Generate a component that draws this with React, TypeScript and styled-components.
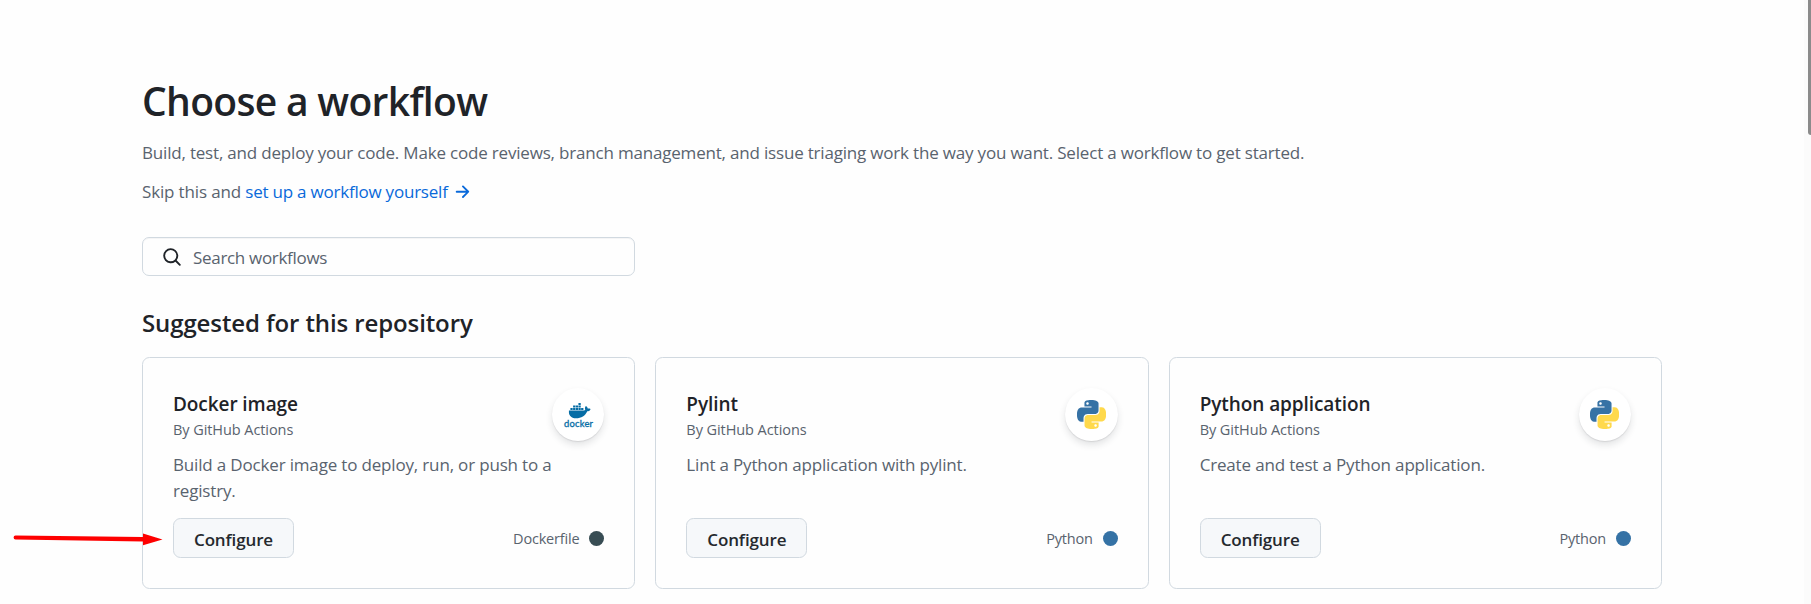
import React from 'react';
import styled, { createGlobalStyle } from 'styled-components';
import { FaDocker } from 'react-icons/fa';

const GlobalStyle = createGlobalStyle`
  * { box-sizing: border-box; }
  body {
    margin: 0;
    overflow: hidden;
    background: #fefefe;
    color: #1f2328;
    font-family: 'Segoe UI', 'Open Sans', 'Noto Sans', sans-serif;
    font-size: 17px;
  }
  h1, h2, h3, p { margin: 0; }
`;

const Page = styled.div`
  position: relative;
  display: flex;
  height: 604px;
`;

const Content = styled.main`
  flex: 1;
  padding: 71px 142px 0 142px;
`;

const ScrollTrack = styled.div`
  display: flex;
  justify-content: flex-end;
  width: 7px;
  background: #fbfbfb;
`;

const ScrollThumb = styled.div`
  width: 3px;
  height: 135px;
  background: #8b8b8b;
  border-bottom-left-radius: 3px;
`;

const Title = styled.h1`
  font-size: 39px;
  font-weight: 600;
  line-height: 60px;
  letter-spacing: -0.68px;
  white-space: nowrap;
`;

const Lead = styled.p`
  margin-top: 9px;
  line-height: 26px;
  letter-spacing: -0.19px;
  color: #59636e;
  white-space: nowrap;
`;

const SkipLine = styled.p`
  display: flex;
  margin-top: 13px;
  line-height: 26px;
  letter-spacing: -0.15px;
  color: #59636e;
  white-space: pre;
`;

const SetupLink = styled.a`
  display: flex;
  align-items: center;
  gap: 4px;
  color: #0969da;
  letter-spacing: -0.22px;
  text-decoration: none;
`;

const SearchBox = styled.label`
  display: flex;
  align-items: center;
  gap: 11px;
  width: 493px;
  height: 39px;
  margin-top: 32px;
  padding: 0 19px;
  border: 1px solid #d1d9e0;
  border-radius: 7px;
  box-shadow: inset 0 1px 0 rgba(31, 35, 40, 0.04);
`;

const SearchInput = styled.input`
  flex: 1;
  min-width: 0;
  height: 26px;
  padding: 2px 0 0;
  border: 0;
  outline: 0;
  background: transparent;
  font: inherit;
  letter-spacing: -0.31px;
  &::placeholder { color: #59636e; opacity: 1; }
`;

const SectionTitle = styled.h2`
  margin-top: 28px;
  font-size: 24px;
  font-weight: 600;
  line-height: 38px;
  letter-spacing: -0.11px;
`;

const CardGrid = styled.div`
  display: grid;
  grid-template-columns: repeat(3, 1fr);
  gap: 20px;
  width: 1520px;
  margin-top: 15px;
`;

const Card = styled.article`
  display: flex;
  flex-direction: column;
  height: 232px;
  padding: 30px;
  border: 1px solid #d1d9e0;
  border-radius: 7.5px;
`;

const CardHead = styled.div`
  display: flex;
  justify-content: space-between;
  height: 63px;
`;

const CardTitle = styled.h3`
  margin-top: 2px;
  font-size: 19px;
  font-weight: 600;
  line-height: 28px;
  letter-spacing: -0.08px;
`;

const Author = styled.p`
  font-size: 14.5px;
  line-height: 24px;
  letter-spacing: -0.07px;
  color: #59636e;
`;

const LogoCircle = styled.div`
  display: flex;
  flex-direction: column;
  align-items: center;
  justify-content: center;
  width: 52.5px;
  height: 53px;
  border-radius: 50%;
  background: #fff;
  box-shadow: 0 1px 1px rgba(37, 41, 46, 0.1), 0 4px 7px rgba(37, 41, 46, 0.12);
`;

const Description = styled.p`
  height: 67px;
  width: 420px;
  padding-top: 1px;
  line-height: 26px;
  letter-spacing: -0.17px;
  color: #59636e;
`;

const CardFoot = styled.div`
  display: flex;
  align-items: center;
  justify-content: space-between;
  height: 40px;
`;

const ConfigureButton = styled.button`
  width: 121px;
  height: 40px;
  padding: 2px 0 0;
  border: 1px solid #d1d9e0;
  border-radius: 7.5px;
  background: #f6f8fa;
  color: #25292e;
  font: inherit;
  font-weight: 600;
  letter-spacing: -0.13px;
`;

const Language = styled.span`
  display: flex;
  align-items: center;
  gap: 10px;
  font-size: 14.5px;
  letter-spacing: -0.2px;
  color: #59636e;
`;

const LanguageDot = styled.span<{ $color: string }>`
  width: 15px;
  height: 15px;
  border-radius: 50%;
  background: ${(p) => p.$color};
`;

const Pointer = styled.svg`
  position: absolute;
  left: 12px;
  top: 530px;
`;

const SearchIcon = () => (
  <svg width="20" height="20" viewBox="0 0 16 16" fill="#1f2328">
    <path d="M10.68 11.74a6 6 0 0 1-7.922-8.982 6 6 0 0 1 8.982 7.922l3.04 3.04a.749.749 0 1 1-1.06 1.06ZM11.5 7a4.499 4.499 0 1 0-8.997 0A4.499 4.499 0 0 0 11.5 7Z" />
  </svg>
);

const ArrowIcon = () => (
  <svg width="20" height="20" viewBox="0 0 16 16" fill="currentColor">
    <path d="M8.22 2.97a.75.75 0 0 1 1.06 0l4.25 4.25a.75.75 0 0 1 0 1.06l-4.25 4.25a.751.751 0 0 1-1.042-.018.751.751 0 0 1-.018-1.042l2.97-2.97H3.75a.75.75 0 0 1 0-1.5h7.44L8.22 4.03a.75.75 0 0 1 0-1.06Z" />
  </svg>
);

const DockerLogo = () => (
  <svg width="53" height="53" viewBox="0 0 53 53" fill="#066da5">
    <FaDocker x="16.7" y="11.6" size={22} color="#066da5" />
    <text x="12" y="38.8" fontFamily="Lato, sans-serif" fontSize="9.4" fontWeight="400" stroke="#066da5" strokeWidth="0.3" textLength="29">docker</text>
  </svg>
);

const PythonLogo = () => (
  <svg width="29" height="29" viewBox="0 0 24 24">
    <path fill="#3672a5" d="M14.25.18l.9.2.73.26.59.3.45.32.34.34.25.34.16.33.1.3.04.26.02.2-.01.13V8.5l-.05.63-.13.55-.21.46-.26.38-.3.31-.33.25-.35.19-.35.14-.33.1-.3.07-.26.04-.21.02H8.77l-.69.05-.59.14-.5.22-.41.27-.33.32-.27.35-.2.36-.15.37-.1.35-.07.32-.04.27-.02.21v3.06H3.17l-.21-.03-.28-.07-.32-.12-.35-.18-.36-.26-.36-.36-.35-.46-.32-.59-.28-.73-.21-.88-.14-1.05-.05-1.23.06-1.22.16-1.04.24-.87.32-.71.36-.57.4-.44.42-.33.42-.24.4-.16.36-.1.32-.05.24-.01h.16l.06.01h8.16v-.83H6.18l-.01-2.75-.02-.37.05-.34.11-.31.17-.28.25-.26.31-.23.38-.2.44-.18.51-.15.58-.12.64-.1.71-.06.77-.04.84-.02 1.27.05zm-6.3 1.98l-.23.33-.08.41.08.41.23.34.33.22.41.09.41-.09.33-.22.23-.34.08-.41-.08-.41-.23-.33-.33-.22-.41-.09-.41.09z" />
    <path fill="#ffd94c" d="M21.1 6.11l.28.06.32.12.35.18.36.27.36.35.35.47.32.59.28.73.21.88.14 1.04.05 1.23-.06 1.23-.16 1.04-.24.86-.32.71-.36.57-.4.45-.42.33-.42.24-.4.16-.36.09-.32.05-.24.02-.16-.01h-8.22v.82h5.84l.01 2.76.02.36-.05.34-.11.31-.17.29-.25.25-.31.24-.38.2-.44.17-.51.15-.58.13-.64.09-.71.07-.77.04-.84.01-1.27-.04-1.07-.14-.9-.2-.73-.25-.59-.3-.45-.33-.34-.34-.25-.34-.16-.33-.1-.3-.04-.25-.02-.2.01-.13v-5.34l.05-.64.13-.54.21-.46.26-.38.3-.32.33-.24.35-.2.35-.14.33-.1.3-.06.26-.04.21-.02.13-.01h5.84l.69-.05.59-.14.5-.21.41-.28.33-.32.27-.35.2-.36.15-.36.1-.35.07-.32.04-.28.02-.21V6.07h2.09l.14.01zm-6.47 14.25l-.23.33-.08.41.08.41.23.33.33.23.41.08.41-.08.33-.23.23-.33.08-.41-.08-.41-.23-.33-.33-.23-.41-.08-.41.08z" />
  </svg>
);

interface Workflow {
  name: string;
  description: string;
  language: string;
  color: string;
  logo: React.ReactNode;
}

const workflows: Workflow[] = [
  {
    name: 'Docker image',
    description: 'Build a Docker image to deploy, run, or push to a registry.',
    language: 'Dockerfile',
    color: '#384d54',
    logo: <DockerLogo />,
  },
  {
    name: 'Pylint',
    description: 'Lint a Python application with pylint.',
    language: 'Python',
    color: '#3572a5',
    logo: <PythonLogo />,
  },
  {
    name: 'Python application',
    description: 'Create and test a Python application.',
    language: 'Python',
    color: '#3572a5',
    logo: <PythonLogo />,
  },
];

export default function App() {
  return (
    <Page>
      <GlobalStyle />
      <Content>
        <Title>Choose a workflow</Title>
        <Lead>
          Build, test, and deploy your code. Make code reviews, branch management, and issue triaging work the way you
          want. Select a workflow to get started.
        </Lead>
        <SkipLine>
          {'Skip this and '}
          <SetupLink>
            set up a workflow yourself
            <ArrowIcon />
          </SetupLink>
        </SkipLine>
        <SearchBox>
          <SearchIcon />
          <SearchInput placeholder="Search workflows" />
        </SearchBox>
        <SectionTitle>Suggested for this repository</SectionTitle>
        <CardGrid>
          {workflows.map((w) => (
            <Card key={w.name}>
              <CardHead>
                <div>
                  <CardTitle>{w.name}</CardTitle>
                  <Author>By GitHub Actions</Author>
                </div>
                <LogoCircle>{w.logo}</LogoCircle>
              </CardHead>
              <Description>{w.description}</Description>
              <CardFoot>
                <ConfigureButton>Configure</ConfigureButton>
                <Language>
                  {w.language}
                  <LanguageDot $color={w.color} />
                </Language>
              </CardFoot>
            </Card>
          ))}
        </CardGrid>
      </Content>
      <ScrollTrack>
        <ScrollThumb />
      </ScrollTrack>
      <Pointer width="152" height="20" viewBox="0 0 152 20" fill="#fe0000">
        <path d="M3.5 5.6 L131 7 V3.5 L150.5 9.5 L131 15.3 V11.6 L3.5 9.4 A1.9 1.9 0 0 1 3.5 5.6 Z" />
      </Pointer>
    </Page>
  );
}
